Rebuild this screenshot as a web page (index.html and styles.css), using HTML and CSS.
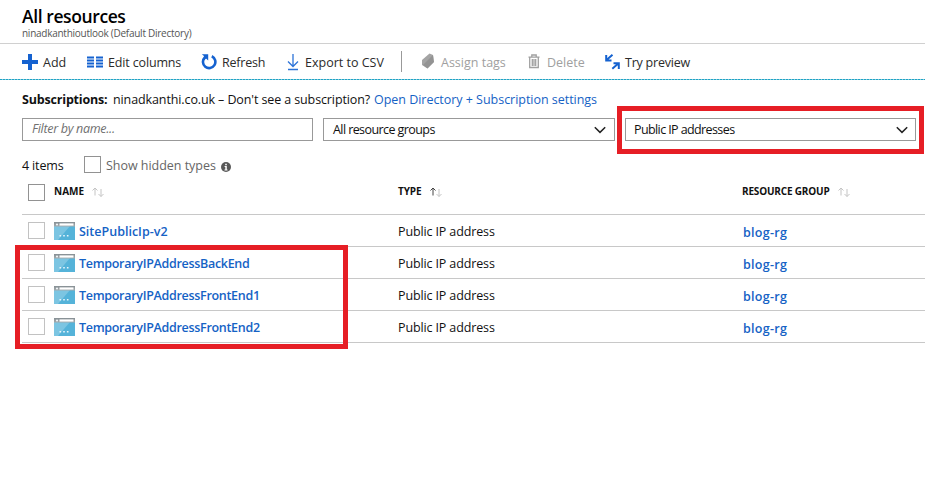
FILE: index.html
```
<!DOCTYPE html>
<html lang="en">
<head>
<meta charset="utf-8">
<title>All resources</title>
<link rel="stylesheet" href="styles.css">
</head>
<body>
<svg class="defs" width="0" height="0" aria-hidden="true">
  <defs>
    <linearGradient id="bar" x1="0" x2="0" y1="0" y2="1"><stop offset="0" stop-color="#868f94"/><stop offset="1" stop-color="#a5abae"/></linearGradient>
    <symbol id="site" viewBox="0 0 21 18">
      <path fill="#55b3d9" d="M0 0h21v18H0z"/>
      <path fill="#7cc5e2" d="M0 4h16L4 18H0z"/>
      <path fill="url(#bar)" d="M0 0h21v4.500H0z"/>
      <circle cx="3" cy="2.500" r="1.100" fill="#eef3f5"/>
      <path fill="#fff" d="M5.500 1.400h14v2.200h-14z"/>
      <path fill="#e8f6fc" d="M5.500 13h1.600v1.600H5.500zm3.700 0h1.600v1.600H9.200zm3.700 0h1.600v1.600h-1.600z"/>
    </symbol>
    <symbol id="chevron" viewBox="0 0 12 8"><path fill="none" stroke="#222" stroke-width="1.500" d="M.8 1.200 6 6.400l5.200-5.200"/></symbol>
    <symbol id="up" viewBox="0 0 6 9"><path fill="none" stroke="currentColor" d="M3 8.500V1M.5 3.500 3 1l2.500 2.500"/></symbol>
    <symbol id="down" viewBox="0 0 6 9"><path fill="none" stroke="currentColor" d="M3 0v7.500M.5 5 3 7.500 5.500 5"/></symbol>
  </defs>
</svg>
<header class="head">
  <h1>All resources</h1>
  <p>ninadkanthioutlook (Default Directory)</p>
</header>
<nav class="toolbar">
  <a class="tool add"><svg width="16" height="16" viewBox="0 0 16 16"><path fill="#1562d0" d="M6 0h4v6h6v4h-6v6H6v-6H0V6h6z"/></svg><span>Add</span></a>
  <a class="tool columns"><svg width="16" height="16" viewBox="0 0 16 16"><path fill="#1562d0" d="M0 2.500h7v2H0zm0 3h7v2H0zm0 3h7v2H0zm0 3h7v2H0zm9-9h7v2H9zm0 3h7v2H9zm0 3h7v2H9zm0 3h7v2H9z"/></svg><span>Edit columns</span></a>
  <a class="tool refresh"><svg width="16" height="16" viewBox="0 0 16 16"><path fill="none" stroke="#1562d0" stroke-width="2.600" d="M10.800 2.300A6.200 6.200 0 1 1 3.800 3.500"/><path fill="#1562d0" d="M.8.200h6.400v6.300L5 4.400 3 6.300V2z"/></svg><span>Refresh</span></a>
  <a class="tool export"><svg width="12" height="18" viewBox="0 0 12 18"><path fill="none" stroke="#2d73d8" stroke-width="1.300" d="M6 1v12.500M1 8.500l5 5 5-5M1 16.500h10"/></svg><span>Export to CSV</span></a>
  <i class="divider"></i>
  <a class="tool tags off"><svg width="14" height="17" viewBox="0 0 14 17"><path fill="#a4a4a4" d="M8.500.5 12 2l1 7-6.500 6.500L1 12V7z"/><path fill="#888" d="M12 2 2 12l4.500 3.500L13 9z" opacity=".6"/></svg><span>Assign tags</span></a>
  <a class="tool delete off"><svg width="12" height="15" viewBox="0 0 12 15"><path fill="none" stroke="#a0a0a0" stroke-width="1.300" d="M.5 3.200h11M3.800 3V1h4.400v2M1.700 3.500v10h8.600v-10M4.300 5v7M6 5v7m1.700-7v7"/></svg><span>Delete</span></a>
  <a class="tool preview"><svg width="15" height="16" viewBox="0 0 15 16"><path fill="none" stroke="#1562d0" stroke-width="2" d="M7.500.8 1.500 6M1.200 1v5.500h5.300M7.300 14.800l6-5.200M8.500 9.200h5.300V15"/></svg><span>Try preview</span></a>
</nav>
<main>
  <p class="subs"><b>Subscriptions:</b><span class="tenant">ninadkanthi.co.uk – Don't see a subscription?</span><a>Open Directory + Subscription settings</a></p>
  <div class="filters">
    <div class="field hint"><span>Filter by name...</span></div>
    <div class="field groups"><span>All resource groups</span><svg width="12" height="8"><use href="#chevron"/></svg></div>
    <div class="field types"><span>Public IP addresses</span><svg width="12" height="8"><use href="#chevron"/></svg><i class="mark mark-types"></i></div>
  </div>
  <div class="summary">
    <span class="count">4 items</span><i class="check"></i><span class="hidden">Show hidden types</span>
    <svg width="10" height="10" viewBox="0 0 10 10"><circle cx="5" cy="5" r="5" fill="#595959"/><path fill="#fff" d="M4.200 1.700h1.600v1.500H4.200zM3.600 4h2.200v3.400h.7v1h-3v-1h.8V5h-.7z"/></svg>
  </div>
  <section class="table">
    <div class="row header">
      <i class="check"></i><span></span><span class="h-name">NAME<svg class="sort" width="6" height="9"><use href="#up"/></svg><svg class="sort d" width="6" height="9"><use href="#down"/></svg></span>
      <span class="h-type">TYPE<svg class="sort on" width="6" height="9"><use href="#up"/></svg><svg class="sort d" width="6" height="9"><use href="#down"/></svg></span>
      <span class="h-group">RESOURCE GROUP<svg class="sort" width="6" height="9"><use href="#up"/></svg><svg class="sort d" width="6" height="9"><use href="#down"/></svg></span>
    </div>
    <div class="row"><i class="check"></i><svg width="21" height="18"><use href="#site"/></svg><a class="name">SitePublicIp-v2</a><span class="type">Public IP address</span><a class="rg">blog-rg</a></div>
    <div class="row"><i class="check"></i><svg width="21" height="18"><use href="#site"/></svg><a class="name long">TemporaryIPAddressBackEnd</a><span class="type">Public IP address</span><a class="rg">blog-rg</a></div>
    <div class="row"><i class="check"></i><svg width="21" height="18"><use href="#site"/></svg><a class="name long">TemporaryIPAddressFrontEnd1</a><span class="type">Public IP address</span><a class="rg">blog-rg</a></div>
    <div class="row"><i class="check"></i><svg width="21" height="18"><use href="#site"/></svg><a class="name long">TemporaryIPAddressFrontEnd2</a><span class="type">Public IP address</span><a class="rg">blog-rg</a></div>
    <i class="mark mark-rows"></i>
  </section>
</main>
</body>
</html>
```
FILE: styles.css
```
* { box-sizing: border-box; }
body { margin: 0; min-height: 486px; background: #fff; color: #111; font: 12.5px/18px "Open Sans", "Noto Sans", sans-serif; white-space: nowrap; }
h1, p { margin: 0; }
svg { display: block; flex: none; }
.defs { position: absolute; }
.head { height: 44px; padding: 4px 0 0 22px; border-bottom: 1px solid #d0d0d0; }
h1 { font-size: 17.500px; line-height: 24px; font-weight: 600; letter-spacing: -.4px; color: #000; }
.head p { font-size: 10px; line-height: 10px; letter-spacing: -.26px; color: #555; }
.toolbar { height: 36px; padding: 0 0 1px 22px; display: flex; align-items: center; background: repeating-linear-gradient(90deg, #1fa3c6 0 2px, #86cbd9 2px 3px) 0 100% / 100% 1px no-repeat; }
.tool { display: flex; align-items: center; gap: 5px; height: 34px; flex: none; }
.tool span { padding-top: 2px; }
.add { width: 65px; }
.columns { width: 114px; letter-spacing: -.15px; }
.refresh { width: 86px; letter-spacing: -.2px; }
.export { width: 114px; gap: 6px; }
.divider { width: 1px; height: 21px; background: #999; margin-right: 19px; }
.tags { width: 107px; gap: 6px; }
.delete { width: 77px; gap: 7px; }
.preview { letter-spacing: -.22px; }
main { padding: 10px 0 0 22px; }
.subs { height: 28px; line-height: 20px; display: flex; }
.subs b { width: 91px; font-weight: 700; letter-spacing: -.18px; }
.tenant { width: 261px; letter-spacing: -.11px; }
a { color: #1562c5; }
.subs a { letter-spacing: -.03px; }
.tool { color: #2b2b2b; }
.off { color: #a0a0a0; }
.filters { display: grid; grid-template-columns: 291px 292px 291px; column-gap: 10px; }
.types { position: relative; }
.field { height: 23px; border: 1px solid #999; padding: 0 8px 0 9px; display: flex; align-items: center; justify-content: space-between; }
.groups { letter-spacing: -.58px; }
.types { padding: 0 7px 0 8px; letter-spacing: -.6px; }
.hint { font-style: italic; color: #707070; padding-bottom: 2px; letter-spacing: -.3px; }
.check { display: block; width: 17px; height: 17px; border: 1px solid #929292; }
.summary { height: 31px; margin-top: 12px; padding-top: 3px; display: flex; align-items: flex-start; line-height: 19px; }
.summary .check { margin-right: 5px; }
.count { width: 62px; letter-spacing: -.15px; }
.hidden { width: 115px; color: #666; letter-spacing: -.03px; }
.summary svg { margin-top: 6px; }
.table { position: relative; }
.row { height: 32px; padding-left: 6px; display: grid; grid-template-columns: 26px 25px 319px 345px 1fr; align-items: center; border-bottom: 1px solid #c8c8c8; }
.row .check { border-color: #c2c2c2; }
.row a { font-weight: 600; }
.row > svg { margin-top: 1px; }
.type { padding-top: 2px; letter-spacing: -.13px; }
.row .rg { padding-top: 4px; letter-spacing: .28px; }
.row .name { padding-top: 2px; }
.row .long { letter-spacing: -.3px; }
.header { height: 31px; grid-template-columns: 26px 0 344px 344px 1fr; align-items: start; font-size: 10px; font-weight: 700; line-height: 15px; }
.header .check { border-color: #929292; }
.header span { display: flex; }
.h-group { letter-spacing: -.18px; }
.h-type { letter-spacing: -.1px; }
.sort { color: #c4c4c4; margin: 3px 0 0 8px; }
.sort.d { margin: 5px 0 0 0; }
.sort.on { color: #444; }
.mark { position: absolute; border: 5px solid #e61e25; }
.mark-types { left: -9px; top: -13px; width: 307px; height: 48px; }
.mark-rows { left: -7px; top: 61px; width: 333px; height: 104px; }
```
